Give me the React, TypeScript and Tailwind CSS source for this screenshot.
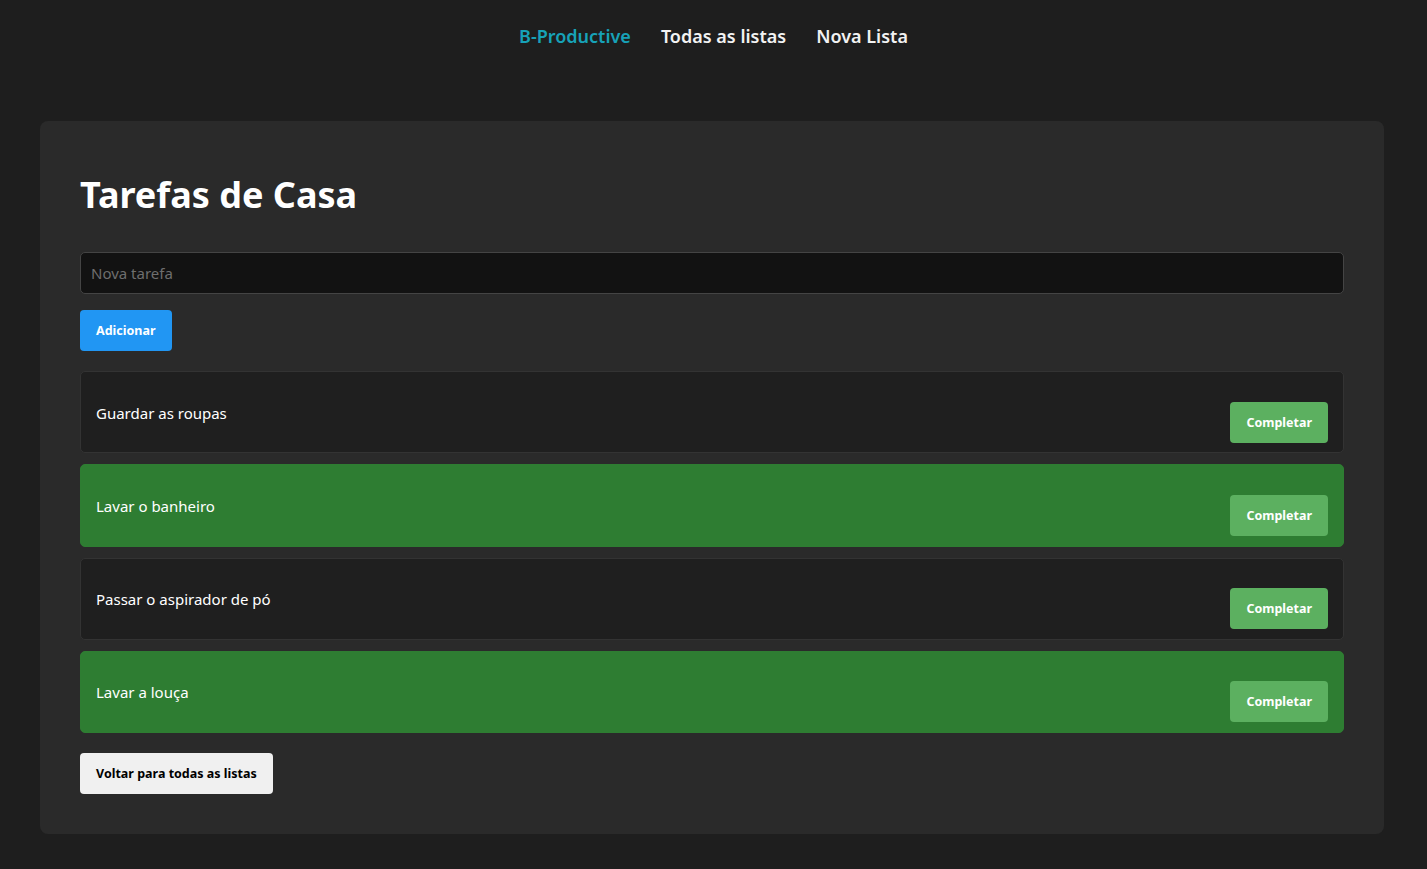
const tasks = [
  { id: 1, text: "Guardar as roupas", done: false },
  { id: 2, text: "Lavar o banheiro", done: true },
  { id: 3, text: "Passar o aspirador de pó", done: false },
  { id: 4, text: "Lavar a louça", done: true },
];

export default function App() {
  return (
    <div
      className="min-h-screen bg-[#1e1e1e] text-white"
      style={{ fontFamily: '"Noto Sans", "Open Sans", sans-serif' }}
    >
      <nav className="h-[73px] flex items-center justify-center gap-[30px] text-[18px] font-semibold">
        <a href="#" className="text-[#17a2b8]">B-Productive</a>
        <a href="#" className="text-[#f2f2f2]">Todas as listas</a>
        <a href="#" className="text-[#f2f2f2]">Nova Lista</a>
      </nav>

      <main className="pl-[40px] pt-[48px] pb-[35px]">
        <div className="w-[1344px] bg-[#2a2a2a] rounded-[8px] p-[40px]">
          <h1 className="text-[36px] font-bold leading-[1.2] mt-[12px] mb-[36px]">Tarefas de Casa</h1>

          <input
            type="text"
            placeholder="Nova tarefa"
            className="block w-full h-[42px] bg-[#121212] border border-[#444] rounded-[5px] px-[10px] text-[15px] text-white placeholder:text-[#6e6e6e] outline-none"
          />

          <button className="mt-[16px] h-[41px] px-[16px] pt-[2px] bg-[#2196f3] rounded-[4px] text-[12.5px] font-bold text-white">
            Adicionar
          </button>

          <ul className="mt-[20px] flex flex-col gap-[11px]">
            {tasks.map((t) => (
              <li
                key={t.id}
                className={`h-[82.2px] flex justify-between items-center px-[15px] rounded-[5px] border ${
                  t.done ? "bg-[#2e7d32] border-[#2e7d32]" : "bg-[#1f1f1f] border-[#333]"
                }`}
              >
                <span className="text-[15px] text-white pt-[1px]">{t.text}</span>
                <button className="mt-[20px] h-[41px] px-[16px] pt-[2px] bg-[#5cb060] rounded-[4px] text-[12.5px] font-bold text-white">
                  Completar
                </button>
              </li>
            ))}
          </ul>

          <button className="mt-[20px] h-[41px] px-[16px] pt-[2px] bg-[#f0f0f0] rounded-[4px] text-[12.5px] font-bold text-black">
            Voltar para todas as listas
          </button>
        </div>
      </main>
    </div>
  );
}
